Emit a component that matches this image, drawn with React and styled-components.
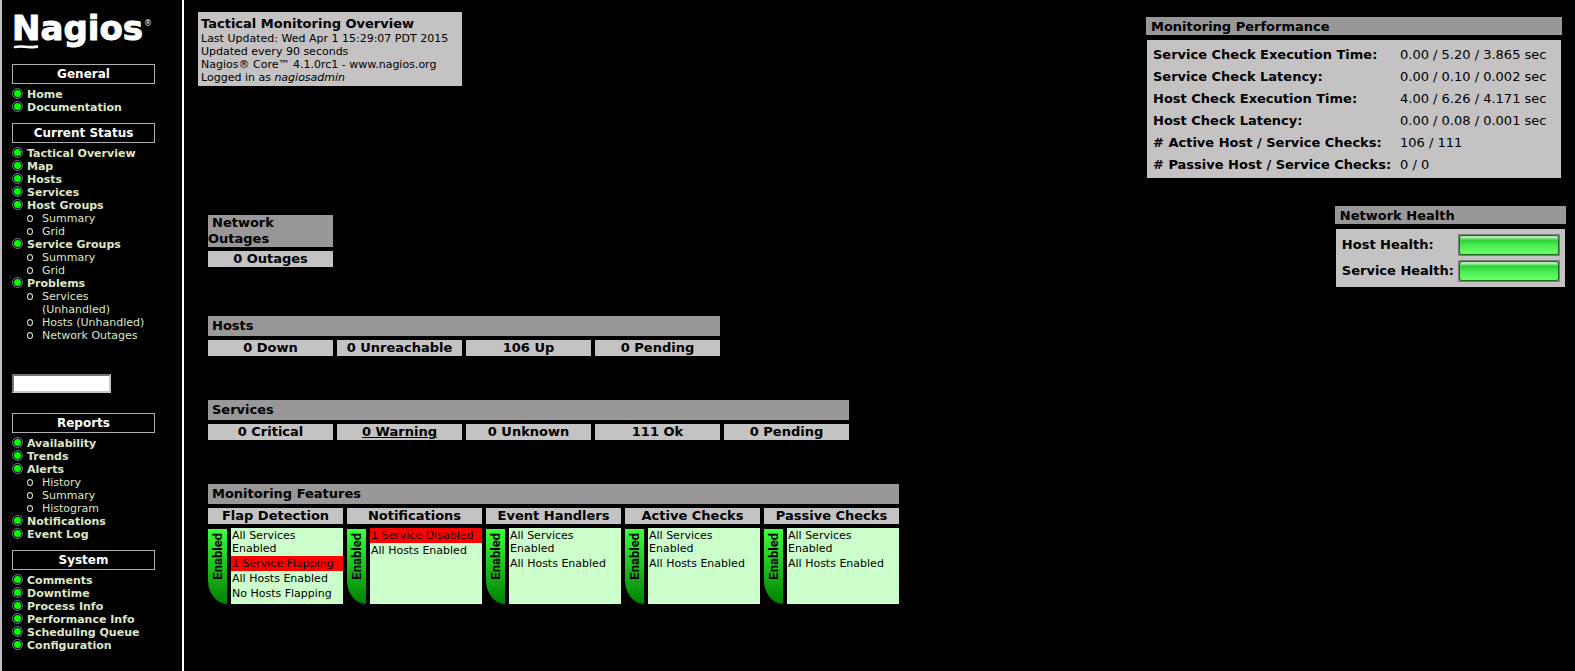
import styled, { createGlobalStyle } from "styled-components";

const GlobalStyle = createGlobalStyle`
    *,
    *::before {
        box-sizing: border-box;
    }

    body {
        margin: 0;
        background: #000;
        color: #000;
        font-family: Verdana, "DejaVu Sans", sans-serif;
        font-size: 13px;
        line-height: 16px;
    }

    a {
        color: inherit;
        text-decoration: none;
    }
`;

const Page = styled.div`
    display: flex;
    min-height: 100vh;
`;

/* Sidebar */

const Sidebar = styled.nav`
    flex: none;
    width: 184px;
    padding: 2px 27px 0 10px;
    border-left: 2px solid #c0c0c0;
    border-right: 2px solid #fff;
`;

const LogoLink = styled.a`
    display: block;
    margin-bottom: 10px;

    svg {
        display: block;
    }
`;

const NavHeading = styled.h2`
    margin: 0 0 4px;
    border: 1px solid #b0b0b0;
    color: #fff;
    font-size: 12px;
    line-height: 18px;
    font-weight: bold;
    text-align: center;
`;

const NavList = styled.ul`
    margin: 0 0 9px;
    padding: 0;
    list-style: none;
    color: #dee7c6;
    font-size: 11px;
    line-height: 13px;
    font-weight: bold;
`;

const NavLink = styled.a`
    display: flex;
    gap: 4px;
`;

const SubList = styled.ul`
    margin: 0;
    padding: 0 0 0 15px;
    list-style: none;
    font-weight: normal;
`;

const SubLink = styled.a`
    display: flex;
    gap: 9px;

    &::before {
        content: "";
        flex: none;
        width: 6px;
        height: 7px;
        margin-top: 3px;
        border: 1px solid #dee7c6;
        border-radius: 50%;
    }
`;

const Search = styled.form`
    margin: 32px 0 20px;
`;

const SearchInput = styled.input`
    display: block;
    width: 99px;
    height: 19px;
    padding: 1px;
    border: 2px inset #c8c8c8;
    border-radius: 0;
    background: #fff;
    font-size: 11px;
`;

/* Main area */

const Main = styled.main`
    flex: 1;
    display: flex;
    justify-content: space-between;
    align-items: flex-start;
`;

const Overview = styled.div`
    padding: 12px 0 0 14px;
`;

const InfoBox = styled.section`
    width: max-content;
    min-width: 264px;
    margin-bottom: 125px;
    padding: 4px 3px 2px;
    background: #c4c2c2;
    font-size: 11px;
    line-height: 13px;
`;

const InfoTitle = styled.h1`
    margin: 0;
    font-size: 13px;
    line-height: 16px;
`;

const StatusTable = styled.table`
    margin: 0 0 ${(props) => (props.$compact ? 41 : 36)}px 6px;
    border-spacing: 4px;
    table-layout: fixed;
    width: ${(props) => props.$columns * (props.$cell + 4) + 4}px;
`;

const TableTitle = styled.th`
    padding: ${(props) => (props.$compact ? "0" : "2px 4px")};
    background: #999797;
    text-align: left;
    text-indent: ${(props) => (props.$compact ? "4px" : "0")};
`;

const StatusCell = styled.td`
    padding: 0;
    background: #c4c2c2;
    font-weight: bold;
    text-align: center;
`;

const StatusLink = styled.a`
    text-decoration: ${(props) => (props.$hovered ? "underline" : "none")};
`;

const FeatureHead = styled.th`
    padding: 0;
    background: #c4c2c2;
`;

const FeatureCell = styled.td`
    padding: 0;
`;

const Feature = styled.div`
    display: flex;
    gap: 4px;
    height: 76px;
`;

const FeatureTab = styled.a`
    flex: none;
    width: 19px;
    margin-top: 1px;
    padding-top: 4px;
    border-bottom-left-radius: 19px 24px;
    background: linear-gradient(#3cff3c, #008000);
    font-family: Roboto, sans-serif;
    font-size: 13px;
    line-height: 19px;
    font-weight: bold;

    span {
        display: block;
        writing-mode: vertical-rl;
        transform: rotate(180deg);
    }
`;

const FeatureList = styled.ul`
    flex: 1;
    margin: 0;
    padding: 0;
    list-style: none;
    background: #ccffcc;
    font-size: 11px;
    line-height: 13px;
`;

const FeatureItem = styled.li`
    padding: 1px;
    background: ${(props) => (props.$alert ? "#f00" : "none")};
`;

const Side = styled.aside`
    display: flex;
    flex-direction: column;
    align-items: flex-end;
    gap: 28px;
    padding: 17px 9px 0 0;
`;

const Panel = styled.section`
    margin-right: ${(props) => props.$inset || 0}px;
`;

const PanelTitle = styled.h2`
    margin: 0 0 5px;
    padding: 2px 5px 0;
    background: #999797;
    font-size: 13px;
    line-height: 16px;
`;

const PanelBody = styled.div`
    margin: 0 1px;
    padding: 3px 4px;
    background: #c4c2c2;
`;

const PerformanceBody = styled(PanelBody)`
    padding-bottom: 1px;
`;

const MetricTable = styled.table`
    border-spacing: 2px;
    white-space: nowrap;

    th,
    td {
        padding: 2px 0;
        text-align: left;
    }

    th {
        min-width: 245px;
    }

    td {
        min-width: 155px;
    }
`;

const HealthTable = styled.table`
    border-spacing: 0;
    white-space: nowrap;

    th {
        padding: 0 3px 0 2px;
        text-align: left;
    }

    td {
        padding: 2px 1px;
    }
`;

const HealthBar = styled.div`
    width: 102px;
    height: 22px;
    padding: 1px;
    background: #808080;

    &::before {
        content: "";
        display: block;
        height: 20px;
        border: 1px solid #1c6b1c;
        border-radius: 3px;
        background: linear-gradient(
            #b4f0b4 0,
            #a0e8a0 2px,
            #2fcf38 4px,
            #4ae850 9px,
            #66ff66 16px
        );
    }
`;

const navigation = [
    {
        title: "General",
        items: [{ label: "Home" }, { label: "Documentation" }],
    },
    {
        title: "Current Status",
        items: [
            { label: "Tactical Overview" },
            { label: "Map" },
            { label: "Hosts" },
            { label: "Services" },
            { label: "Host Groups", children: ["Summary", "Grid"] },
            { label: "Service Groups", children: ["Summary", "Grid"] },
            {
                label: "Problems",
                children: [
                    "Services (Unhandled)",
                    "Hosts (Unhandled)",
                    "Network Outages",
                ],
            },
        ],
        search: true,
    },
    {
        title: "Reports",
        items: [
            { label: "Availability" },
            { label: "Trends" },
            {
                label: "Alerts",
                children: ["History", "Summary", "Histogram"],
            },
            { label: "Notifications" },
            { label: "Event Log" },
        ],
    },
    {
        title: "System",
        items: [
            { label: "Comments" },
            { label: "Downtime" },
            { label: "Process Info" },
            { label: "Performance Info" },
            { label: "Scheduling Queue" },
            { label: "Configuration" },
        ],
    },
];

const hosts = ["0 Down", "0 Unreachable", "106 Up", "0 Pending"];
const services = [
    "0 Critical",
    "0 Warning",
    "0 Unknown",
    "111 Ok",
    "0 Pending",
];

const allEnabled = [
    { text: "All Services Enabled" },
    { text: "All Hosts Enabled" },
];

const features = [
    {
        name: "Flap Detection",
        items: [
            { text: "All Services Enabled" },
            { text: "1 Service Flapping", alert: true },
            { text: "All Hosts Enabled" },
            { text: "No Hosts Flapping" },
        ],
    },
    {
        name: "Notifications",
        items: [
            { text: "1 Service Disabled", alert: true },
            { text: "All Hosts Enabled" },
        ],
    },
    { name: "Event Handlers", items: allEnabled },
    { name: "Active Checks", items: allEnabled },
    { name: "Passive Checks", items: allEnabled },
];

const performance = [
    ["Service Check Execution Time:", "0.00 / 5.20 / 3.865 sec"],
    ["Service Check Latency:", "0.00 / 0.10 / 0.002 sec"],
    ["Host Check Execution Time:", "4.00 / 6.26 / 4.171 sec"],
    ["Host Check Latency:", "0.00 / 0.08 / 0.001 sec"],
    ["# Active Host / Service Checks:", "106 / 111"],
    ["# Passive Host / Service Checks:", "0 / 0"],
];

function Logo() {
    return (
        <svg width="142" height="52" viewBox="0 0 142 52" fill="#fff">
            <text
                x="0"
                y="38"
                fontFamily="DejaVu Sans, sans-serif"
                fontSize="34"
                fontWeight="bold"
                stroke="#fff"
                strokeWidth="1"
                strokeLinejoin="round"
            >
                Nagios
            </text>
            <text
                x="132"
                y="24"
                fontFamily="DejaVu Sans, sans-serif"
                fontSize="8"
            >
                ®
            </text>
            <path
                d="M3 45 Q8 44 13 44.8 T25 44.6"
                fill="none"
                stroke="#fff"
                strokeWidth="2.6"
                strokeLinecap="round"
            />
        </svg>
    );
}

function Bullet() {
    return (
        <svg width="11" height="11" viewBox="0 0 11 11">
            <circle
                cx="5.5"
                cy="5.5"
                r="5"
                fill="#000"
                stroke="#7a76a8"
                strokeWidth="1"
            />
            <circle cx="5.5" cy="5.5" r="3.5" fill="#0f0" />
        </svg>
    );
}

function NavSection({ section }) {
    return (
        <>
            <NavHeading>{section.title}</NavHeading>
            <NavList>
                {section.items.map(({ label, children }) => (
                    <li key={label}>
                        <NavLink href="#">
                            <Bullet />
                            {label}
                        </NavLink>
                        {children && (
                            <SubList>
                                {children.map((child) => (
                                    <li key={child}>
                                        <SubLink href="#">{child}</SubLink>
                                    </li>
                                ))}
                            </SubList>
                        )}
                    </li>
                ))}
            </NavList>
            {section.search && (
                <Search>
                    <SearchInput type="text" aria-label="Quick Search" />
                </Search>
            )}
        </>
    );
}

function StatusSection({ title, cells, hovered, compact }) {
    return (
        <StatusTable $columns={cells.length} $cell={125} $compact={compact}>
            <thead>
                <tr>
                    <TableTitle colSpan={cells.length} $compact={compact}>
                        {title}
                    </TableTitle>
                </tr>
            </thead>
            <tbody>
                <tr>
                    {cells.map((cell) => (
                        <StatusCell key={cell}>
                            <StatusLink href="#" $hovered={cell === hovered}>
                                {cell}
                            </StatusLink>
                        </StatusCell>
                    ))}
                </tr>
            </tbody>
        </StatusTable>
    );
}

function FeatureSection() {
    return (
        <StatusTable $columns={features.length} $cell={135}>
            <thead>
                <tr>
                    <TableTitle colSpan={features.length}>
                        Monitoring Features
                    </TableTitle>
                </tr>
                <tr>
                    {features.map(({ name }) => (
                        <FeatureHead key={name}>{name}</FeatureHead>
                    ))}
                </tr>
            </thead>
            <tbody>
                <tr>
                    {features.map(({ name, items }) => (
                        <FeatureCell key={name}>
                            <Feature>
                                <FeatureTab href="#">
                                    <span>Enabled</span>
                                </FeatureTab>
                                <FeatureList>
                                    {items.map(({ text, alert }) => (
                                        <FeatureItem key={text} $alert={alert}>
                                            <a href="#">{text}</a>
                                        </FeatureItem>
                                    ))}
                                </FeatureList>
                            </Feature>
                        </FeatureCell>
                    ))}
                </tr>
            </tbody>
        </StatusTable>
    );
}

function App() {
    return (
        <>
            <GlobalStyle />
            <Page>
                <Sidebar>
                    <LogoLink href="#" aria-label="Nagios">
                        <Logo />
                    </LogoLink>
                    {navigation.map((section) => (
                        <NavSection key={section.title} section={section} />
                    ))}
                </Sidebar>

                <Main>
                    <Overview>
                        <InfoBox>
                            <InfoTitle>Tactical Monitoring Overview</InfoTitle>
                            <div>Last Updated: Wed Apr 1 15:29:07 PDT 2015</div>
                            <div>Updated every 90 seconds</div>
                            <div>
                                Nagios® Core™ 4.1.0rc1 -{" "}
                                <a href="#">www.nagios.org</a>
                            </div>
                            <div>
                                Logged in as <i>nagiosadmin</i>
                            </div>
                        </InfoBox>

                        <StatusSection
                            title="Network Outages"
                            cells={["0 Outages"]}
                            compact
                        />
                        <StatusSection title="Hosts" cells={hosts} />
                        <StatusSection
                            title="Services"
                            cells={services}
                            hovered="0 Warning"
                        />
                        <FeatureSection />
                    </Overview>

                    <Side>
                        <Panel $inset={4}>
                            <PanelTitle>Monitoring Performance</PanelTitle>
                            <PerformanceBody>
                                <MetricTable>
                                    <tbody>
                                        {performance.map(([label, value]) => (
                                            <tr key={label}>
                                                <th scope="row">{label}</th>
                                                <td>
                                                    <a href="#">{value}</a>
                                                </td>
                                            </tr>
                                        ))}
                                    </tbody>
                                </MetricTable>
                            </PerformanceBody>
                        </Panel>

                        <Panel>
                            <PanelTitle>Network Health</PanelTitle>
                            <PanelBody>
                                <HealthTable>
                                    <tbody>
                                        <tr>
                                            <th scope="row">Host Health:</th>
                                            <td>
                                                <HealthBar />
                                            </td>
                                        </tr>
                                        <tr>
                                            <th scope="row">Service Health:</th>
                                            <td>
                                                <HealthBar />
                                            </td>
                                        </tr>
                                    </tbody>
                                </HealthTable>
                            </PanelBody>
                        </Panel>
                    </Side>
                </Main>
            </Page>
        </>
    );
}

export default App;
